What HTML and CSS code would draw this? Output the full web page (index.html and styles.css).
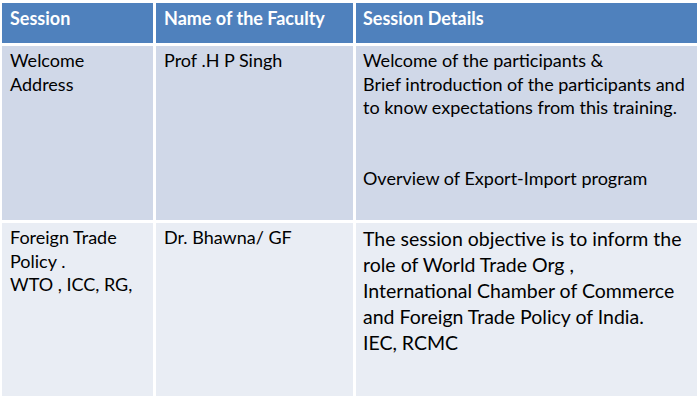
FILE: index.html
```html
<!DOCTYPE html>
<html>
<head>
<meta charset="utf-8">
<link rel="stylesheet" href="styles.css">
</head>
<body>
<div class="table">
  <div class="cell head">Session</div>
  <div class="cell head">Name of the Faculty</div>
  <div class="cell head">Session Details</div>

  <div class="cell odd">Welcome<br>Address</div>
  <div class="cell odd">Prof .H P Singh</div>
  <div class="cell odd">Welcome of the participants &amp;<br>Brief introduction of the participants and<br>to know expectations from this training.<br><br><br>Overview of Export-Import program</div>

  <div class="cell even">Foreign Trade<br>Policy .<br>WTO , ICC, RG,</div>
  <div class="cell even">Dr. Bhawna/ GF</div>
  <div class="cell even big">The session objective is to inform the<br>role of World Trade Org ,<br>International Chamber of Commerce<br>and Foreign Trade Policy of India.<br>IEC, RCMC</div>
</div>
</body>
</html>
```
FILE: styles.css
```css
html, body {
  margin: 0;
  padding: 0;
  background: #ffffff;
}
body {
  width: 700px;
  height: 400px;
  overflow: hidden;
  font-family: "Lato", "Liberation Sans", sans-serif;
  color: #000;
}
.table {
  margin: 3px 0 0 2px;
  width: 695px;
  display: grid;
  grid-template-columns: 151px 197px 341px;
  grid-template-rows: 40px 174px 173px;
  gap: 3px;
}
.cell {
  padding: 3px 8px 0 8px;
  font-size: 18px;
  line-height: 23.5px;
  white-space: nowrap;
}
.cell:nth-child(3n) {
  padding-left: 7px;
}
.head {
  background: #4f81bd;
  color: #fff;
  font-weight: bold;
  font-size: 18px;
  line-height: 22px;
  padding-top: 4px;
}
.odd {
  background: #d0d8e8;
}
.even {
  background: #e9edf4;
}
.big {
  font-size: 19.5px;
  line-height: 26px;
  padding-top: 3px;
}
```
